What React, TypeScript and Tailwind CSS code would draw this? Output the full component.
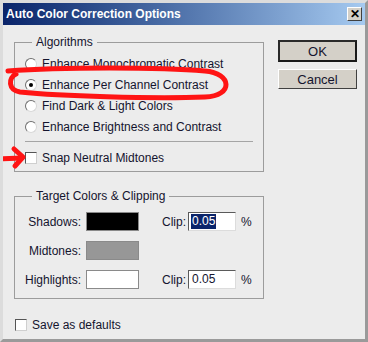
const font = "font-['Liberation_Sans',Arial,sans-serif]";

const algorithms = [
  { label: "Enhance Monochromatic Contrast", checked: false },
  { label: "Enhance Per Channel Contrast", checked: true },
  { label: "Find Dark & Light Colors", checked: false },
  { label: "Enhance Brightness and Contrast", checked: false },
];

const Radio = ({ checked }: { checked: boolean }) => (
  <span className="w-[12px] h-[12px] rounded-full bg-white border border-t-[#6f6f6f] border-l-[#6f6f6f] border-r-[#d8d8d8] border-b-[#d8d8d8] flex items-center justify-center shrink-0">
    {checked && <span className="w-[4px] h-[4px] rounded-full bg-black" />}
  </span>
);

const Check = () => (
  <span className="w-[12px] h-[12px] bg-white border border-t-[#555] border-l-[#555] border-r-[#cfcfcf] border-b-[#cfcfcf] shrink-0" />
);

const Swatch = ({ color }: { color: string }) => (
  <span className={`w-[53px] h-[19px] border border-[#8a8a8a] ${color}`} />
);

const ClipInput = ({ selected }: { selected?: boolean }) => (
  <span className="w-[48px] h-[19px] bg-white border border-t-[#5a5a5a] border-l-[#5a5a5a] border-r-[#dcdcdc] border-b-[#dcdcdc] flex items-center pl-[2px]">
    <span className={selected ? "bg-[#0a246a] text-white px-[1px] leading-[15px]" : "px-[1px] leading-[15px]"}>0.05</span>
  </span>
);

const rows = [
  { label: "Shadows:", swatch: "bg-black", clip: true, selected: true },
  { label: "Midtones:", swatch: "bg-[#979797]", clip: false, selected: false },
  { label: "Highlights:", swatch: "bg-white", clip: true, selected: false },
];

export default function App() {
  return (
    <div className={`relative w-[368px] h-[342px] bg-[#ececec] border-[3px] border-t-[#dcdcdc] border-l-[#dcdcdc] border-r-[#9a9a9a] border-b-[#9a9a9a] overflow-hidden text-[12px] text-[#14142e] ${font}`}>
      <div className="h-[22px] bg-gradient-to-r from-[#0a246a] to-[#a6caf0] flex items-center justify-between pl-[3px] pr-[3px]">
        <span className="text-white font-bold text-[12px]">Auto Color Correction Options</span>
        <span className="w-[15px] h-[14px] bg-[#d4d0c8] border border-t-white border-l-white border-r-[#404040] border-b-[#404040] flex items-center justify-center text-black text-[12px] leading-none font-bold">
          ✕
        </span>
      </div>

      <div className="flex pl-[11px] pt-[9px]">
        <div className="flex flex-col">
          <fieldset className="w-[250px] h-[138px] border border-[#9c9c9c] px-[10px]">
            <legend className="ml-[7px] px-[4px] leading-[16px]">Algorithms</legend>
            <div className="flex flex-col pt-[3px]">
              {algorithms.map((a) => (
                <div key={a.label} className="h-[21px] flex items-center gap-[5px]">
                  <Radio checked={a.checked} />
                  <span>{a.label}</span>
                </div>
              ))}
              <div className="h-px bg-[#a5a5a5] mt-[4px] mb-[5px]" />
              <div className="h-[21px] flex items-center gap-[5px]">
                <Check />
                <span>Snap Neutral Midtones</span>
              </div>
            </div>
          </fieldset>

          <fieldset className="w-[250px] h-[111px] border border-[#9c9c9c] mt-[16px] pl-[10px]">
            <legend className="ml-[7px] px-[4px] leading-[16px]">Target Colors &amp; Clipping</legend>
            <div className="flex flex-col gap-[10px] pt-[8px]">
              {rows.map((r) => (
                <div key={r.label} className="h-[19px] flex items-center">
                  <span className="w-[61px] text-right pr-[5px] whitespace-nowrap">{r.label}</span>
                  <Swatch color={r.swatch} />
                  {r.clip && (
                    <>
                      <span className="ml-[23px] w-[26px]">Clip:</span>
                      <ClipInput selected={r.selected} />
                      <span className="ml-[5px]">%</span>
                    </>
                  )}
                </div>
              ))}
            </div>
          </fieldset>

          <div className="flex items-center gap-[5px] mt-[17px] ml-[1px]">
            <Check />
            <span>Save as defaults</span>
          </div>
        </div>

        <div className="flex flex-col ml-[14px] mt-[6px] gap-[7px]">
          <button className="w-[79px] h-[22px] bg-[#d4d0c8] border-2 border-t-[#2a2a2a] border-l-[#2a2a2a] border-r-[#1a1a1a] border-b-[#1a1a1a] text-[13px] leading-none">
            OK
          </button>
          <button className="w-[79px] h-[20px] bg-[#d4d0c8] border border-t-white border-l-white border-r-[#404040] border-b-[#404040] text-[13px] leading-none">
            Cancel
          </button>
        </div>
      </div>

      <svg className="absolute left-[-3px] top-[-3px] pointer-events-none" width="368" height="342" viewBox="0 0 368 342" fill="none">
        <path
          d="M8 71 C60 67 160 67 205 71 C232 73 234 96 205 97 C150 99 60 96 20 92 C8 90 8 78 16 74"
          stroke="#ff1414"
          strokeWidth="5"
          strokeLinecap="round"
        />
        <path d="M-2 159 L22 158" stroke="#ff1414" strokeWidth="5" strokeLinecap="round" />
        <path d="M14 149 L23 157 L15 166" stroke="#ff1414" strokeWidth="5" strokeLinecap="round" strokeLinejoin="round" />
      </svg>
    </div>
  );
}
